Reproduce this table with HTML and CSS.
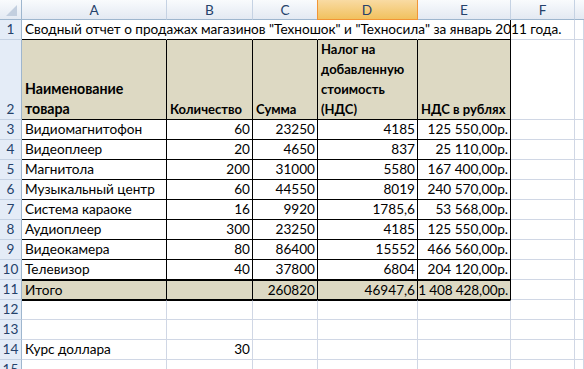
FILE: index.html
```html
<!DOCTYPE html>
<html lang="ru">
<head>
<meta charset="utf-8">
<title>Сводный отчет</title>
<link rel="stylesheet" href="styles.css">
</head>
<body>
<div class="sheet">
  <div class="corner"><span class="tri"></span></div>
  <div class="ch">A</div>
  <div class="ch">B</div>
  <div class="ch">C</div>
  <div class="ch sel">D</div>
  <div class="ch">E</div>
  <div class="ch">F</div>
  <div class="ch last"></div>

  <div class="rh">1</div>
  <div class="c nr bb ov"><span class="title">Сводный отчет о продажах магазинов "Техношок" и "Техносила" за январь 2011 года.</span></div>
  <div class="c nr bb"></div>
  <div class="c nr bb"></div>
  <div class="c nr bb"></div>
  <div class="c bb t"></div>
  <div class="c"></div>
  <div class="c"></div>

  <div class="rh">2</div>
  <div class="c t h big">Наименование товара</div>
  <div class="c t h">Количество</div>
  <div class="c t h">Сумма</div>
  <div class="c t h">Налог на добавленную стоимость (НДС)</div>
  <div class="c t h">НДС в рублях</div>
  <div class="c"></div>
  <div class="c"></div>

  <div class="rh">3</div>
  <div class="c t">Видиомагнитофон</div>
  <div class="c t r">60</div>
  <div class="c t r">23250</div>
  <div class="c t r">4185</div>
  <div class="c t r">125 550,00р.</div>
  <div class="c"></div>
  <div class="c"></div>

  <div class="rh">4</div>
  <div class="c t">Видеоплеер</div>
  <div class="c t r">20</div>
  <div class="c t r">4650</div>
  <div class="c t r">837</div>
  <div class="c t r">25 110,00р.</div>
  <div class="c"></div>
  <div class="c"></div>

  <div class="rh">5</div>
  <div class="c t">Магнитола</div>
  <div class="c t r">200</div>
  <div class="c t r">31000</div>
  <div class="c t r">5580</div>
  <div class="c t r">167 400,00р.</div>
  <div class="c"></div>
  <div class="c"></div>

  <div class="rh">6</div>
  <div class="c t">Музыкальный центр</div>
  <div class="c t r">60</div>
  <div class="c t r">44550</div>
  <div class="c t r">8019</div>
  <div class="c t r">240 570,00р.</div>
  <div class="c"></div>
  <div class="c"></div>

  <div class="rh">7</div>
  <div class="c t">Система караоке</div>
  <div class="c t r">16</div>
  <div class="c t r">9920</div>
  <div class="c t r">1785,6</div>
  <div class="c t r">53 568,00р.</div>
  <div class="c"></div>
  <div class="c"></div>

  <div class="rh">8</div>
  <div class="c t">Аудиоплеер</div>
  <div class="c t r">300</div>
  <div class="c t r">23250</div>
  <div class="c t r">4185</div>
  <div class="c t r">125 550,00р.</div>
  <div class="c"></div>
  <div class="c"></div>

  <div class="rh">9</div>
  <div class="c t">Видеокамера</div>
  <div class="c t r">80</div>
  <div class="c t r">86400</div>
  <div class="c t r">15552</div>
  <div class="c t r">466 560,00р.</div>
  <div class="c"></div>
  <div class="c"></div>

  <div class="rh">10</div>
  <div class="c t">Телевизор</div>
  <div class="c t r">40</div>
  <div class="c t r">37800</div>
  <div class="c t r">6804</div>
  <div class="c t r">204 120,00р.</div>
  <div class="c"></div>
  <div class="c"></div>

  <div class="rh">11</div>
  <div class="c t tot">Итого</div>
  <div class="c t tot"></div>
  <div class="c t tot r">260820</div>
  <div class="c t tot r">46947,6</div>
  <div class="c t tot r tight">1 408 428,00р.</div>
  <div class="c"></div>
  <div class="c"></div>

  <div class="rh">12</div>
  <div class="c bt"></div>
  <div class="c bt"></div>
  <div class="c bt"></div>
  <div class="c bt"></div>
  <div class="c bt"></div>
  <div class="c"></div>
  <div class="c"></div>

  <div class="rh">13</div>
  <div class="c"></div>
  <div class="c"></div>
  <div class="c"></div>
  <div class="c"></div>
  <div class="c"></div>
  <div class="c"></div>
  <div class="c"></div>

  <div class="rh">14</div>
  <div class="c">Курс доллара</div>
  <div class="c r">30</div>
  <div class="c"></div>
  <div class="c"></div>
  <div class="c"></div>
  <div class="c"></div>
  <div class="c"></div>

  <div class="rh">15</div>
  <div class="c"></div>
  <div class="c"></div>
  <div class="c"></div>
  <div class="c"></div>
  <div class="c"></div>
  <div class="c"></div>
  <div class="c"></div>
</div>
</body>
</html>
```

FILE: styles.css
```css
html, body {
  margin: 0;
  padding: 0;
  background: #ffffff;
  overflow: hidden;
}

.sheet {
  display: grid;
  grid-template-columns: 22px 145px 86px 65px 100px 93px 64px 1fr;
  grid-template-rows: 20px 20px 80px repeat(13, 20px);
  width: 584px;
  height: 369px;
  overflow: hidden;
  font-family: Lato, "Noto Sans", sans-serif;
  font-size: 13.6px;
  color: #000000;
}

.sheet > div {
  box-sizing: border-box;
  min-width: 0;
}

.corner {
  position: relative;
  background: linear-gradient(#f9fbfd, #e4eaf3);
  border-right: 1px solid #9eb6ce;
  border-bottom: 1px solid #9eb6ce;
}

.tri {
  position: absolute;
  right: 4px;
  bottom: 3px;
  width: 0;
  height: 0;
  border-left: 11px solid transparent;
  border-bottom: 11px solid #c3cfdf;
}

.ch {
  display: flex;
  align-items: center;
  justify-content: center;
  background: linear-gradient(#f9fbfd, #e3e9f2);
  border-right: 1px solid #c5d2e3;
  border-bottom: 1px solid #9eb6ce;
  color: #25426b;
  line-height: 18px;
  padding-top: 1px;
}

.ch.sel {
  background: linear-gradient(#f9dba3, #f1c15e);
  border-right: 1px solid #f29536;
  border-bottom: 1px solid #f29536;
  box-shadow: inset 1px 0 0 #f29536;
  margin-left: -1px;
  color: #25426b;
}

.ch.last {
  border-right: none;
}

.rh {
  display: flex;
  align-items: flex-end;
  justify-content: center;
  background: #e4ecf7;
  border-right: 1px solid #9eb6ce;
  border-bottom: 1px solid #c5d2e3;
  color: #25426b;
  line-height: 19px;
}

.c {
  display: flex;
  align-items: flex-end;
  padding: 0 3px;
  border-right: 1px solid #d0d7e5;
  border-bottom: 1px solid #d0d7e5;
  white-space: nowrap;
  overflow: hidden;
  line-height: 19px;
}

.c.r {
  justify-content: flex-end;
  padding-left: 0;
  padding-right: 2px;
}

.c.tight {
  letter-spacing: -0.15px;
}

.c.nr {
  border-right-color: transparent;
}

.c.ov {
  overflow: visible;
}

.title {
  white-space: nowrap;
}

.c.bb {
  border-bottom-color: #000000;
}

.c.t {
  border-right-color: #000000;
  border-bottom-color: #000000;
}

.c.h {
  background: #ddd9c3;
  font-weight: bold;
  font-size: 13px;
  white-space: normal;
  line-height: 20px;
}

.c.h.big {
  font-size: 14.2px;
}

.c.tot {
  background: #ddd9c3;
  border-top: 1px solid #000000;
  line-height: 18px;
}

.c.bt {
  border-top: 1px solid #000000;
  line-height: 18px;
}
```
